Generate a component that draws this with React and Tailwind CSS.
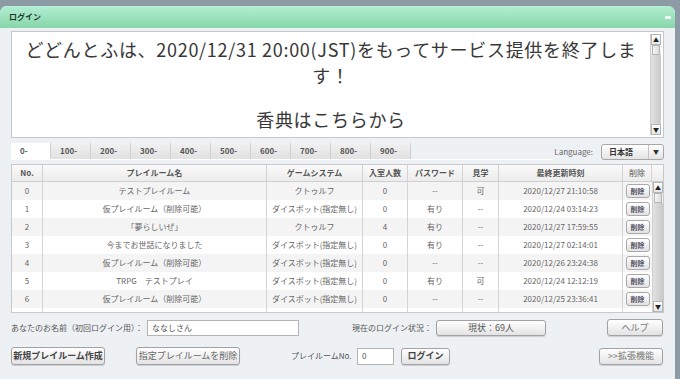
import React from 'react';

const rows = [
  {no: '0', name: 'テストプレイルーム', sys: 'クトゥルフ', num: '0', pw: '--', view: '可', date: '2020/12/27 21:10:58'},
  {no: '1', name: '仮プレイルーム（削除可能）', sys: 'ダイスボット(指定無し)', num: '0', pw: '有り', view: '--', date: '2020/12/24 03:14:23'},
  {no: '2', name: '「夢らしいぜ」', sys: 'クトゥルフ', num: '4', pw: '有り', view: '--', date: '2020/12/27 17:59:55'},
  {no: '3', name: '今までお世話になりました', sys: 'ダイスボット(指定無し)', num: '0', pw: '有り', view: '--', date: '2020/12/27 02:14:01'},
  {no: '4', name: '仮プレイルーム（削除可能）', sys: 'ダイスボット(指定無し)', num: '0', pw: '--', view: '--', date: '2020/12/26 23:24:38'},
  {no: '5', name: 'TRPG　テストプレイ', sys: 'ダイスボット(指定無し)', num: '0', pw: '有り', view: '可', date: '2020/12/24 12:12:19'},
  {no: '6', name: '仮プレイルーム（削除可能）', sys: 'ダイスボット(指定無し)', num: '0', pw: '--', view: '--', date: '2020/12/25 23:36:41'},
  {no: '', name: '', sys: '', num: '', pw: '', view: '', date: ''},
];

const tabs = ['0-', '100-', '200-', '300-', '400-', '500-', '600-', '700-', '800-', '900-'];

const cols = 'grid grid-cols-[31px_224px_96px_45px_55px_36px_124px_29px]';
const cell = 'flex items-center justify-center border-r border-[#d4d4d4] whitespace-nowrap overflow-hidden';

const Btn = ({children, className = ''}) => (
  <button className={'flex items-center justify-center whitespace-nowrap rounded-[3px] border border-[#a2a2a2] bg-gradient-to-b from-white to-[#e3e3e3] text-[9px] text-[#444] shadow-[0_1px_1px_rgba(0,0,0,0.15)] ' + className}>
    {children}
  </button>
);

const ScrollBar = ({className = ''}) => (
  <div className={'flex flex-col border-l border-[#cfcfcf] bg-[#f0f0f0] ' + className}>
    <div className="flex h-[11px] items-center justify-center border border-[#b5b5b5] bg-gradient-to-b from-white to-[#e6e6e6] text-[6px] text-[#222]">▲</div>
    <div className="mx-px h-[10px] border border-[#b5b5b5] bg-gradient-to-r from-[#f6f6f6] to-[#dcdcdc]"></div>
    <div className="flex-1 bg-gradient-to-r from-[#e2e2e2] to-[#c9c9c9]"></div>
    <div className="flex h-[11px] items-center justify-center border border-[#b5b5b5] bg-gradient-to-b from-white to-[#e6e6e6] text-[6px] text-[#222]">▼</div>
  </div>
);

export default function App() {
  return (
    <div className="h-[379px] w-[680px] overflow-hidden bg-[#8c9ba6] pt-[6px] pr-[5px] font-['Noto_Sans_CJK_JP','Noto_Sans',sans-serif]">
      <div className="flex h-[373px] flex-col overflow-hidden rounded-t-[7px] bg-[#eef1f4]">
        <div className="flex h-[22px] items-center justify-between bg-gradient-to-b from-[#b3eed2] to-[#86d6aa] pl-[9px] pr-[4px]">
          <span className="text-[8px] font-bold text-[#1e3a2c]">ログイン</span>
          <span className="h-[3px] w-[6px] bg-[#eafff4]"></span>
        </div>

        <div className="flex flex-col px-[11px] pr-[11px]">
          <div className="mt-[3px] flex h-[107px] border border-[#c5c8cb] bg-white">
            <div className="flex-1 pt-[4px] text-center text-[18px] leading-[26px] tracking-[0.7px] text-[#383838]">
              <p>どどんとふは、2020/12/31 20:00(JST)をもってサービス提供を終了しま</p>
              <p>す！</p>
              <p className="mt-[18px]">香典はこちらから</p>
            </div>
            <ScrollBar className="my-[2px] mr-[2px] w-[11px]" />
          </div>

          <div className="mt-[5px] flex h-[17px] items-center">
            <div className="flex h-[16px] items-end border-b border-white">
              {tabs.map((t, i) => (
                <div
                  key={t}
                  className={
                    'flex h-[16px] w-[40px] items-center border-r border-[#cfcfcf] pl-[9px] text-[8px] font-bold ' +
                    (i === 0 ? 'w-[29px] bg-white text-[#555]' : 'bg-gradient-to-b from-[#f1f1f1] to-[#e1e1e1] text-[#555]')
                  }
                >
                  {t}
                </div>
              ))}
              <div className="w-[142px]"></div>
            </div>
            <div className="flex-1"></div>
            <span className="mr-[8px] text-[8px] text-[#666]">Language:</span>
            <div className="flex h-[16px] w-[63px] items-center rounded-[3px] border border-[#a7a7a7] bg-gradient-to-b from-white to-[#e4e4e4]">
              <span className="flex-1 pl-[7px] text-[8px] font-bold text-[#333]">日本語</span>
              <span className="flex h-full w-[15px] items-center justify-center border-l border-[#c4c4c4] text-[6px] text-[#333]">▼</span>
            </div>
          </div>

          <div className="mt-[4px] flex flex-col border border-[#c9c9c9] bg-white text-[8px] text-[#666]">
            <div className="flex h-[17px] border-b border-[#cfcfcf] bg-gradient-to-b from-[#fafafa] to-[#ececec] font-bold text-[#555]">
              <div className={cols}>
                <div className={cell}>No.</div>
                <div className={cell}>プレイルーム名</div>
                <div className={cell}>ゲームシステム</div>
                <div className={cell}>入室人数</div>
                <div className={cell}>パスワード</div>
                <div className={cell}>見学</div>
                <div className={cell}>最終更新時刻</div>
                <div className={cell + ' font-normal'}>削除</div>
              </div>
            </div>
            <div className="flex h-[130px] overflow-hidden">
              <div className="flex flex-col">
                {rows.map((r, i) => (
                  <div key={i} className={cols + ' h-[18px] shrink-0 ' + (i % 2 === 0 ? 'bg-[#f4f4f4]' : 'bg-white')}>
                    <div className={cell}>{r.no}</div>
                    <div className={cell}>{r.name}</div>
                    <div className={cell}>{r.sys}</div>
                    <div className={cell}>{r.num}</div>
                    <div className={cell}>{r.pw}</div>
                    <div className={cell}>{r.view}</div>
                    <div className={cell}>{r.date}</div>
                    <div className="flex items-center justify-center">
                      {r.date && (
                        <span className="flex h-[14px] w-[24px] items-center justify-center rounded-[3px] border border-[#a9a9a9] bg-gradient-to-b from-white to-[#e2e2e2] text-[7px] font-bold text-[#556]">削除</span>
                      )}
                    </div>
                  </div>
                ))}
              </div>
              <ScrollBar className="w-[11px]" />
            </div>
          </div>

          <div className="mt-[6px] flex h-[17px] items-center whitespace-nowrap text-[8px] text-[#555]">
            <span className="w-[136px]">あなたのお名前（初回ログイン用）：</span>
            <div className="flex h-[16px] w-[152px] items-center border border-[#b4b4b4] bg-white pl-[4px] text-[8px] text-[#555]">ななしさん</div>
            <span className="ml-[53px] w-[84px]">現在のログイン状況：</span>
            <Btn className="h-[16px] w-[110px] font-normal text-[#555]">現状：69人</Btn>
            <div className="flex-1"></div>
            <Btn className="mr-[1px] h-[17px] w-[56px] text-[#777]">ヘルプ</Btn>
          </div>

          <div className="mt-[11px] flex h-[18px] items-center whitespace-nowrap text-[8px] text-[#555]">
            <Btn className="h-[18px] w-[94px] font-bold text-[#333]">新規プレイルーム作成</Btn>
            <Btn className="ml-[31px] h-[18px] w-[104px] text-[#666]">指定プレイルームを削除</Btn>
            <span className="ml-[51px] w-[66px]">プレイルームNo.</span>
            <div className="flex h-[17px] w-[37px] items-center border border-[#b4b4b4] bg-white pl-[4px] text-[8px]">0</div>
            <Btn className="ml-[7px] h-[17px] w-[49px] font-bold text-[#333]">ログイン</Btn>
            <div className="flex-1"></div>
            <Btn className="mr-[1px] h-[17px] w-[64px] text-[#777]">&gt;&gt;拡張機能</Btn>
          </div>
        </div>
      </div>
    </div>
  );
}
